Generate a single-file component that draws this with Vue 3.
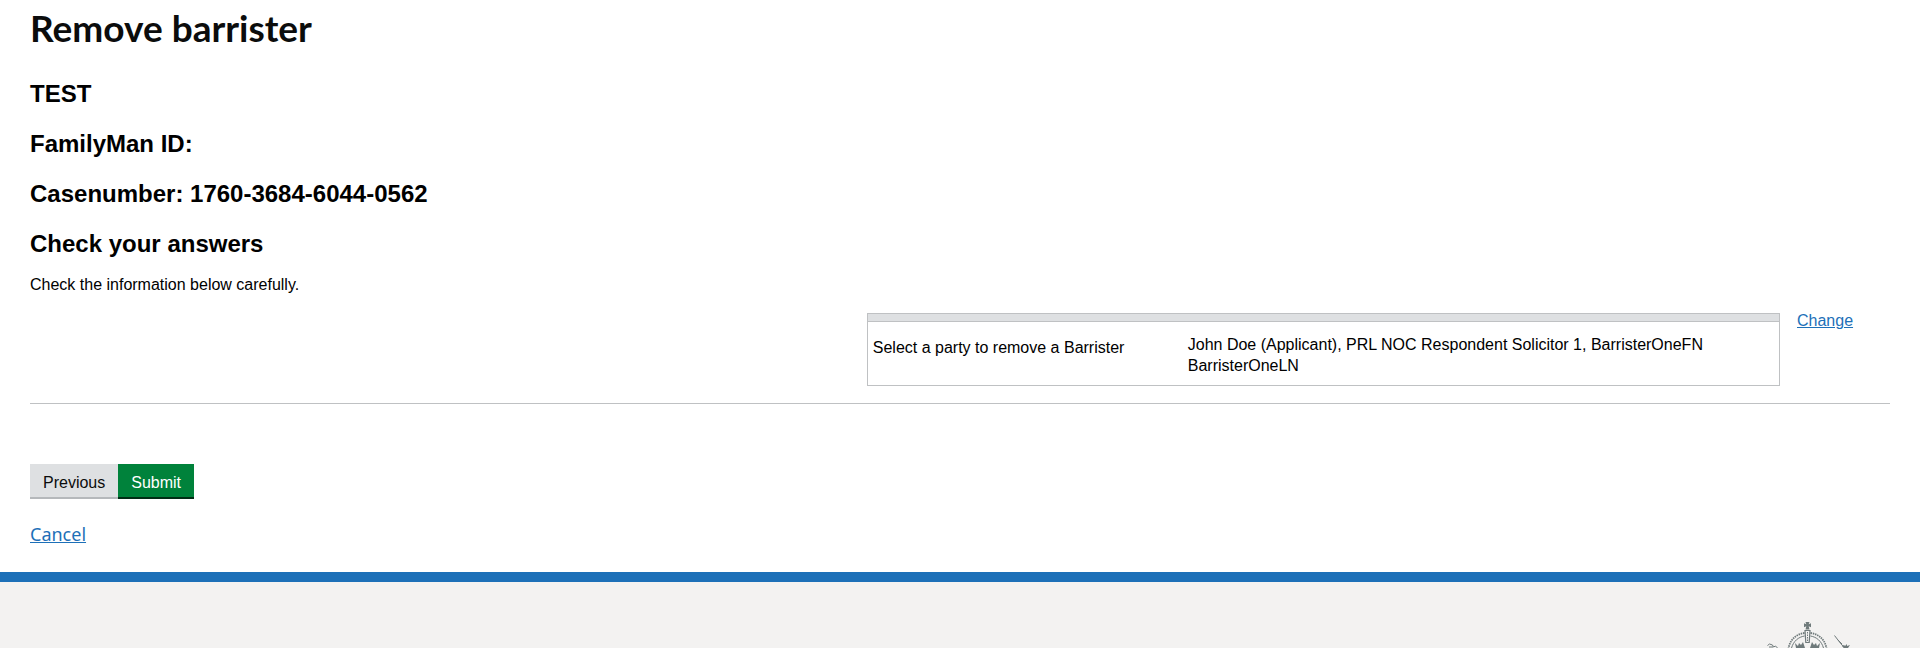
<script setup>
const caseHeadings = ['TEST', 'FamilyMan ID:', 'Casenumber: 1760-3684-6044-0562']
</script>

<template>
  <div class="page">
    <main class="content">
      <h1>Remove barrister</h1>
      <h2 v-for="heading in caseHeadings" :key="heading">{{ heading }}</h2>
      <h2 class="section">Check your answers</h2>
      <p class="intro">Check the information below carefully.</p>

      <div class="answers">
        <table class="summary">
          <thead>
            <tr><td colspan="2"></td></tr>
          </thead>
          <tbody>
            <tr>
              <th scope="row">Select a party to remove a Barrister</th>
              <td>John Doe (Applicant), PRL NOC Respondent Solicitor 1, BarristerOneFN BarristerOneLN</td>
            </tr>
          </tbody>
        </table>
        <div class="change"><a href="#">Change</a></div>
      </div>

      <form class="actions" @submit.prevent>
        <button type="button" class="secondary">Previous</button>
        <button type="submit" class="primary">Submit</button>
      </form>
      <p class="cancel"><a href="#">Cancel</a></p>
    </main>

    <footer class="footer">
      <a class="crest" href="#" aria-label="Crown copyright">
        <svg viewBox="0 0 125 26" width="125" height="26" fill="none" stroke="#6f7a7b">
          <g fill="#6f7a7b" stroke="none">
            <path d="M60.500 0h4l-.8 2.300 2.300-1v4l-2.300-1 .8 3.200h-4l.8-3.200-2.300 1v-4l2.300 1z" />
            <path d="M51 26l-1-5 3 3 1-3 2 2 2-3 1 3 1 3zM65 26l1-3 1-3 2 3 2-2 1 3 3-3-1 5z" />
            <path d="M97 24l2-1 1 1 2-2v2l3-1-2 3h-4z" />
          </g>
          <path d="M22.500 23.500l2-1.500 3 1 1 2 2-1 2 2M24 25h4" />
          <path d="M60 8.500h5l-.8 12h-3.400z" stroke-width="1.200" />
          <path d="M62.500 10v10" stroke-dasharray="1.500 1" />
          <path d="M59.500 11c-8 1-14 6-16 15M65.500 11c8 1 14 6 16 15" stroke-width="1.800" stroke-dasharray="1.500 .8" />
          <path d="M59.500 14c-6 1-11 5-13 12M65.500 14c6 1 11 5 13 12" />
          <path d="M89.500 13.500l5 6.500 5 6M93 18l4 4" />
        </svg>
      </a>
    </footer>
  </div>
</template>

<style>
body {
  margin: 0;
  background: #fff;
}
</style>

<style scoped>
.page {
  display: flex;
  flex-direction: column;
  height: 100vh;
  overflow: hidden;
  color: #000;
  font: 16px/20px "Liberation Sans", Arial, sans-serif;
}
.content {
  padding: 8px 30px 24px;
}
h1 {
  margin: 0 0 31px;
  color: #0b0c0c;
  font: 700 37px/40px Lato, sans-serif;
}
h2 {
  margin: 0 0 20px;
  font-size: 24px;
  line-height: 30px;
}
.section {
  margin-bottom: 17px;
  line-height: 29px;
}
.intro {
  margin: 0 0 18px;
}
a {
  color: #1d70b8;
}
.answers {
  display: flex;
  justify-content: flex-end;
  padding-bottom: 17px;
  border-bottom: 1px solid #bfc1c3;
}
.summary {
  width: 49.1%;
  border: 1px solid #bfc1c3;
  border-collapse: collapse;
}
.summary thead td {
  height: 7px;
  padding: 0;
  background: #dee0e2;
  border-bottom: 1px solid #bfc1c3;
}
.summary th,
.summary tbody td {
  text-align: left;
  vertical-align: top;
  font-weight: 400;
  line-height: 21px;
}
.summary th {
  width: 310px;
  padding: 15px 5px 0;
}
.summary tbody td {
  padding: 12px 5px 9px 0;
}
.change {
  width: 110px;
  padding-left: 17px;
  box-sizing: border-box;
  line-height: 16px;
}
.actions {
  display: flex;
  margin-top: 60px;
}
button {
  padding: 8px 13px 4px;
  border: 0;
  border-radius: 0;
  font: 16px/21px "Liberation Sans", Arial, sans-serif;
}
.secondary {
  color: #0b0c0c;
  background: #dee0e2;
  border-bottom: 2px solid #b5b8bb;
}
.primary {
  color: #fff;
  background: #00823b;
  border-bottom: 2px solid #002d14;
}
.cancel {
  margin: 23px 0 1px;
  font: 18px/25px "Noto Sans", sans-serif;
}
.footer {
  flex: 1;
  display: flex;
  justify-content: flex-end;
  align-items: flex-start;
  padding: 40px 30px 0;
  background: #f3f2f1;
  border-top: 10px solid #1d70b8;
}
.crest {
  width: 166px;
}
.crest svg {
  display: block;
  margin: 0 auto;
}
</style>
